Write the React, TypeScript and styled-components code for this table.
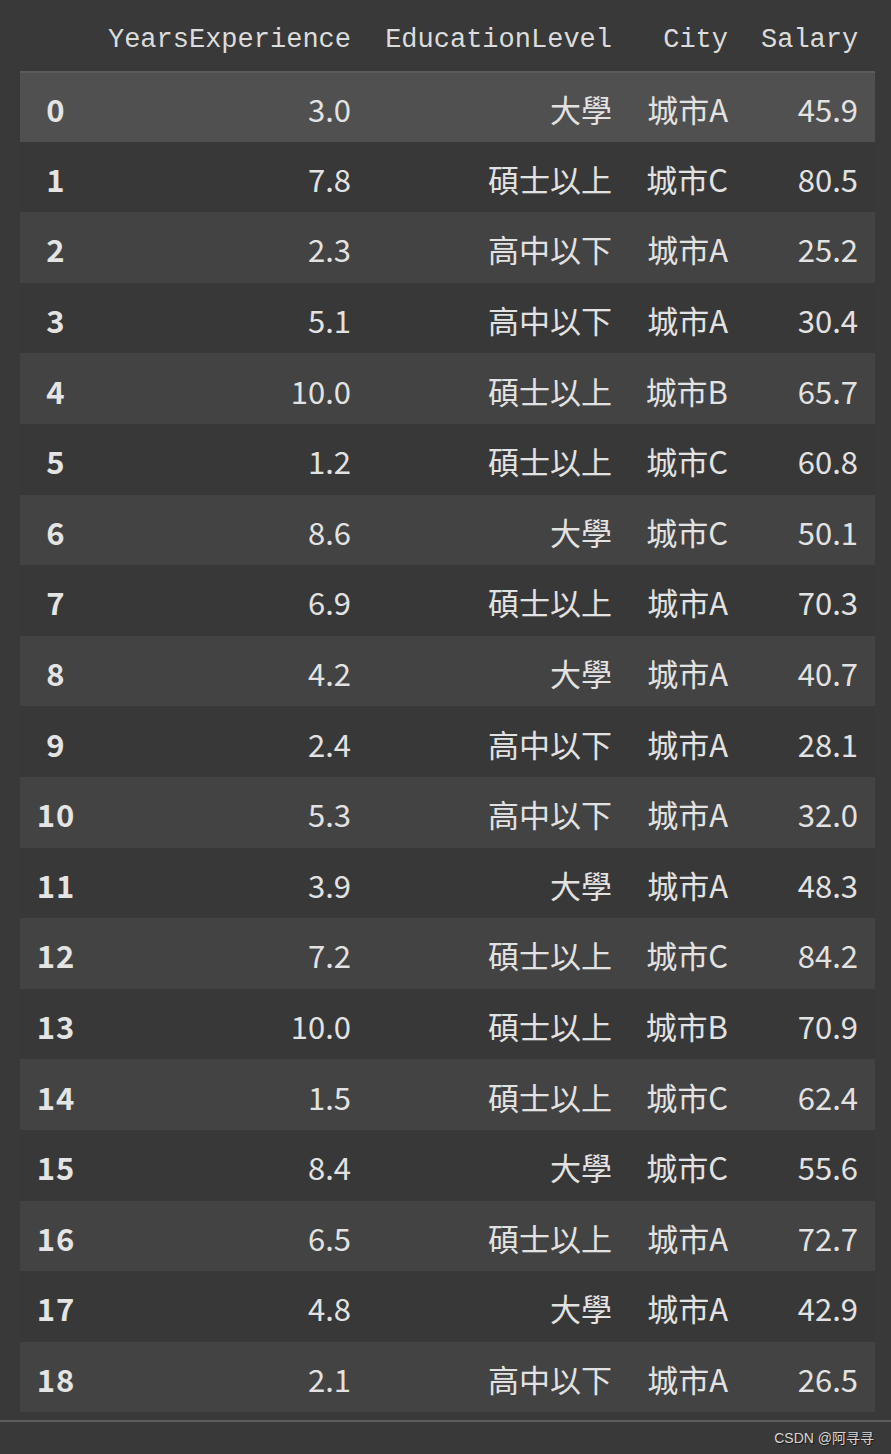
import React from "react";
import styled, { createGlobalStyle } from "styled-components";

const GlobalStyle = createGlobalStyle`
	html, body {
		margin: 0;
		padding: 0;
		background: #393939;
	}
`;

const Page = styled.div`
	min-height: 1454px;
	background: #393939;
	display: flex;
	flex-direction: column;
	font-family: "Noto Sans CJK TC", "Noto Sans", sans-serif;
`;

const Table = styled.div`
	margin-left: 20px;
	width: 855px;
	display: flex;
	flex-direction: column;
`;

const COLS = "71px 277px 261px 116px 130px";

const HeaderRow = styled.div`
	display: grid;
	grid-template-columns: ${COLS};
	height: 71px;
	align-items: center;
`;

const HeadCell = styled.div`
	font-family: "Liberation Mono", "DejaVu Sans Mono", monospace;
	font-size: 27px;
	color: #dcdcdc;
	text-align: right;
	padding: 9px 17px 0 16px;
	white-space: nowrap;
`;

const Row = styled.div<{ $tone: "hover" | "dark" | "light" }>`
	display: grid;
	grid-template-columns: ${COLS};
	height: 70.6px;
	box-sizing: border-box;
	align-items: center;
	background: ${(p) =>
		p.$tone === "hover" ? "#505050" : p.$tone === "light" ? "#434343" : "#383838"};
	border-top: ${(p) => (p.$tone === "hover" ? "2px solid #5c5c5c" : "none")};
`;

const IndexCell = styled.div`
	font-weight: 700;
	font-size: 31px;
	letter-spacing: 1px;
	color: #e4e4e4;
	text-align: center;
	padding: 3px 0 0 1px;
`;

const Cell = styled.div`
	font-size: 31px;
	color: #e2e2e2;
	text-align: right;
	padding: 3px 17px 0 16px;
	white-space: nowrap;
`;

const Divider = styled.div`
	margin-top: 8px;
	height: 2px;
	background: #5e5e5e;
`;

const Watermark = styled.div`
	align-self: flex-end;
	margin: 5px 17px 0 0;
	font-size: 14px;
	color: #d6d6d6;
	font-family: "Liberation Sans", "Noto Sans CJK SC", sans-serif;
	text-shadow: 1px 1px 1px rgba(0, 0, 0, 0.6);
`;

const rows: [number, string, string, string][] = [
	[3.0, "大學", "城市A", "45.9"],
	[7.8, "碩士以上", "城市C", "80.5"],
	[2.3, "高中以下", "城市A", "25.2"],
	[5.1, "高中以下", "城市A", "30.4"],
	[10.0, "碩士以上", "城市B", "65.7"],
	[1.2, "碩士以上", "城市C", "60.8"],
	[8.6, "大學", "城市C", "50.1"],
	[6.9, "碩士以上", "城市A", "70.3"],
	[4.2, "大學", "城市A", "40.7"],
	[2.4, "高中以下", "城市A", "28.1"],
	[5.3, "高中以下", "城市A", "32.0"],
	[3.9, "大學", "城市A", "48.3"],
	[7.2, "碩士以上", "城市C", "84.2"],
	[10.0, "碩士以上", "城市B", "70.9"],
	[1.5, "碩士以上", "城市C", "62.4"],
	[8.4, "大學", "城市C", "55.6"],
	[6.5, "碩士以上", "城市A", "72.7"],
	[4.8, "大學", "城市A", "42.9"],
	[2.1, "高中以下", "城市A", "26.5"],
];

const App = () => {
	return (
		<Page>
			<GlobalStyle />
			<Table>
				<HeaderRow>
					<HeadCell />
					<HeadCell>YearsExperience</HeadCell>
					<HeadCell>EducationLevel</HeadCell>
					<HeadCell>City</HeadCell>
					<HeadCell>Salary</HeadCell>
				</HeaderRow>
				{rows.map(([years, edu, city, salary], i) => (
					<Row key={i} $tone={i === 0 ? "hover" : i % 2 === 0 ? "light" : "dark"}>
						<IndexCell>{i}</IndexCell>
						<Cell>{years.toFixed(1)}</Cell>
						<Cell>{edu}</Cell>
						<Cell>{city}</Cell>
						<Cell>{salary}</Cell>
					</Row>
				))}
			</Table>
			<Divider />
			<Watermark>CSDN @阿寻寻</Watermark>
		</Page>
	);
};

export default App;
